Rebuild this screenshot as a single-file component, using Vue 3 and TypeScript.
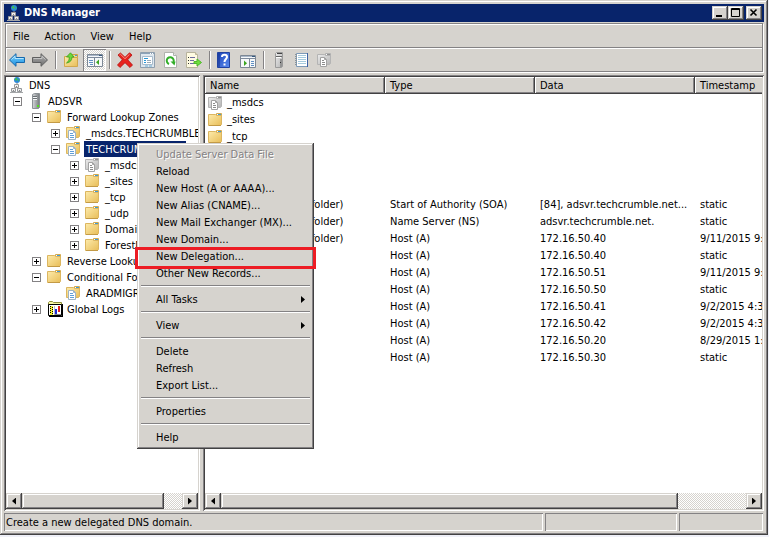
<script setup lang="ts">
import { ref } from 'vue'

interface TreeNode {
  label: string
  level: number
  icon: string
  toggle?: '+' | '-'
}

interface DnsRecord {
  name: string
  icon: string
  type: string
  data: string
  stamp: string
}

interface MenuEntry {
  label: string
  disabled?: boolean
  submenu?: boolean
  marked?: boolean
}

const selected = ref('TECHCRUMBLE.NET')

const menus = ['File', 'Action', 'View', 'Help']

const toolGroups = [
  [
    { icon: 'back', label: 'Back' },
    { icon: 'forward', label: 'Forward' },
  ],
  [
    { icon: 'up', label: 'Up one level' },
    { icon: 'console-tree', label: 'Show or hide console tree' },
  ],
  [
    { icon: 'delete', label: 'Delete' },
    { icon: 'properties', label: 'Properties' },
    { icon: 'refresh', label: 'Refresh' },
    { icon: 'export', label: 'Export list' },
  ],
  [
    { icon: 'help', label: 'Help' },
    { icon: 'action-pane', label: 'Show or hide action pane' },
  ],
  [
    { icon: 'tower', label: 'New server' },
    { icon: 'notebook', label: 'New record' },
    { icon: 'zone-grey', label: 'New zone' },
  ],
]

const tree: TreeNode[] = [
  { label: 'DNS', level: 0, icon: 'dns' },
  { label: 'ADSVR', level: 1, icon: 'server', toggle: '-' },
  { label: 'Forward Lookup Zones', level: 2, icon: 'folder', toggle: '-' },
  { label: '_msdcs.TECHCRUMBLE.NET', level: 3, icon: 'zone', toggle: '+' },
  { label: 'TECHCRUMBLE.NET', level: 3, icon: 'zone', toggle: '-' },
  { label: '_msdcs', level: 4, icon: 'zone-grey', toggle: '+' },
  { label: '_sites', level: 4, icon: 'folder', toggle: '+' },
  { label: '_tcp', level: 4, icon: 'folder', toggle: '+' },
  { label: '_udp', level: 4, icon: 'folder', toggle: '+' },
  { label: 'DomainDnsZones', level: 4, icon: 'folder', toggle: '+' },
  { label: 'ForestDnsZones', level: 4, icon: 'folder', toggle: '+' },
  { label: 'Reverse Lookup Zones', level: 2, icon: 'folder', toggle: '+' },
  { label: 'Conditional Forwarders', level: 2, icon: 'folder', toggle: '-' },
  { label: 'ARADMIGR', level: 3, icon: 'zone' },
  { label: 'Global Logs', level: 2, icon: 'logs', toggle: '+' },
]

const folder = (name: string, icon = 'folder'): DnsRecord => ({ name, icon, type: '', data: '', stamp: '' })
const host = (data: string, stamp: string, name = ''): DnsRecord => ({ name, icon: name ? 'notebook' : '', type: 'Host (A)', data, stamp })

const records: DnsRecord[] = [
  folder('_msdcs', 'zone-grey'),
  folder('_sites'),
  folder('_tcp'),
  folder(''),
  folder(''),
  folder(''),
  { name: '(same as parent folder)', icon: 'notebook', type: 'Start of Authority (SOA)', data: '[84], adsvr.techcrumble.net...', stamp: 'static' },
  { name: '(same as parent folder)', icon: 'notebook', type: 'Name Server (NS)', data: 'adsvr.techcrumble.net.', stamp: 'static' },
  host('172.16.50.40', '9/11/2015 9:00:00', '(same as parent folder)'),
  host('172.16.50.40', 'static'),
  host('172.16.50.51', '9/11/2015 9:00:00'),
  host('172.16.50.50', 'static'),
  host('172.16.50.41', '9/2/2015 4:30:00'),
  host('172.16.50.42', '9/2/2015 4:30:00'),
  host('172.16.50.20', '8/29/2015 1:00:00'),
  host('172.16.50.30', 'static'),
]

const contextMenu: MenuEntry[][] = [
  [
    { label: 'Update Server Data File', disabled: true },
    { label: 'Reload' },
    { label: 'New Host (A or AAAA)...' },
    { label: 'New Alias (CNAME)...' },
    { label: 'New Mail Exchanger (MX)...' },
    { label: 'New Domain...' },
    { label: 'New Delegation...', marked: true },
    { label: 'Other New Records...' },
  ],
  [{ label: 'All Tasks', submenu: true }],
  [{ label: 'View', submenu: true }],
  [{ label: 'Delete' }, { label: 'Refresh' }, { label: 'Export List...' }],
  [{ label: 'Properties' }],
  [{ label: 'Help' }],
]

const indent = (n: TreeNode) => ({ paddingLeft: `${n.level === 0 ? 3 : 19 * n.level - 12}px` })
</script>

<template>
  <svg class="sprite" aria-hidden="true">
    <defs>
      <linearGradient id="gFolder" x1="0" y1="0" x2="1" y2="1">
        <stop offset="0" stop-color="#fdebab" /><stop offset="1" stop-color="#e8bd58" />
      </linearGradient>
      <linearGradient id="gGrey" x1="0" y1="0" x2="1" y2="1">
        <stop offset="0" stop-color="#ececec" /><stop offset="1" stop-color="#b4b4b4" />
      </linearGradient>
      <linearGradient id="gBlue" x1="0" y1="0" x2="0" y2="1">
        <stop offset="0" stop-color="#7ed2fb" /><stop offset="1" stop-color="#1a90e2" />
      </linearGradient>
      <linearGradient id="gArrow" x1="0" y1="0" x2="0" y2="1">
        <stop offset="0" stop-color="#b0b0b0" /><stop offset="1" stop-color="#6e6e6e" />
      </linearGradient>
      <linearGradient id="gTower" x1="0" y1="0" x2="1" y2="0">
        <stop offset="0" stop-color="#d5d8da" /><stop offset="1" stop-color="#74797d" />
      </linearGradient>
      <linearGradient id="gHelp" x1="0" y1="0" x2="1" y2="1">
        <stop offset="0" stop-color="#1c45b8" /><stop offset="1" stop-color="#5c8cf0" />
      </linearGradient>
    </defs>

    <symbol id="i-folder" viewBox="0 0 16 16">
      <path d="M8.500 3.500V1.500h5v3" fill="#f6d98a" stroke="#d3aa50" />
      <path d="M.5 13.500v-11h7l1 1h5v9l-1 1z" fill="url(#gFolder)" stroke="#dcb660" />
      <path d="M9 2.500h1" stroke="#fff" /><path d="M10 2.500h3" stroke="#3f9bd6" />
      <path d="M1 13.500h12" stroke="#c39a45" />
    </symbol>
    <symbol id="i-zone" viewBox="0 0 16 16">
      <path d="M8.500 3.500V1.500h5v3" fill="#f6d98a" stroke="#d3aa50" />
      <path d="M.5 12.500v-10h7l1 1h5v8l-1 1z" fill="url(#gFolder)" stroke="#dcb660" />
      <path d="M9 2.500h1" stroke="#fff" /><path d="M10 2.500h3" stroke="#3f9bd6" />
      <path d="M2.500 5.500h5l2 2v7h-7z" fill="#fff" stroke="#9db4c6" />
      <path d="M7.500 5.500v2h2" fill="none" stroke="#9db4c6" />
      <path d="M4 8.500h3M4 10.500h4M4 12.500h4" stroke="#5f9ed6" />
    </symbol>
    <symbol id="i-zone-grey" viewBox="0 0 16 16">
      <path d="M8.500 3.500V1.500h5v3" fill="#dcdcdc" stroke="#b0b0b0" />
      <path d="M.5 12.500v-10h7l1 1h5v8l-1 1z" fill="url(#gGrey)" stroke="#b4b4b4" />
      <path d="M9 2.500h1" stroke="#fff" /><path d="M10 2.500h3" stroke="#909090" />
      <path d="M3.500 5.500h4l2 2v7h-6z" fill="#fff" stroke="#a2a2a2" />
      <path d="M7.500 5.500v2h2" fill="none" stroke="#a2a2a2" />
      <path d="M5 8.500h2M5 10.500h3M5 12.500h3" stroke="#8c8c8c" />
    </symbol>
    <symbol id="i-dns" viewBox="0 0 16 16">
      <circle cx="8" cy="3" r="3" fill="#2b86d9" />
      <path d="M5.500 2.500l2-2 1 1.500-1 2zM9 2.500l1.500-.5-1 3z" fill="#3fc04a" />
      <path d="M8 6v1M8 10v1" stroke="#8d8d8d" />
      <path d="M5.500 7.500h4v3h-4z" fill="#f2f2f2" stroke="#9a9a9a" />
      <path d="M2.500 11.500h4v3h-4zM8.500 11.500h4v3h-4z" fill="#eee" stroke="#94979a" />
      <path d="M1 15.500h13" stroke="#a4a6a8" />
      <path d="M4 13.500h1M10 13.500h1M7 9.500h1" stroke="#888" />
    </symbol>
    <symbol id="i-server" viewBox="0 0 16 16">
      <path d="M4.500 1.500l2-1h5v14l-1 1h-6z" fill="url(#gTower)" stroke="#8b9195" />
      <path d="M5 3.500h4M5 5.500h4" stroke="#6b7175" />
      <path d="M5 4.500h4M5 6.500h4" stroke="#f4f6f7" />
      <path d="M9 12h2v2H9z" fill="#4fe01d" />
    </symbol>
    <symbol id="i-tower" viewBox="0 0 16 16">
      <path d="M4.500 1.500l1-1h6v14l-1 1h-6z" fill="url(#gGrey)" stroke="#9a9a9a" />
      <path d="M6 1.500h5" stroke="#444" /><path d="M5 4.500h6" stroke="#666" />
      <path d="M5 5.500h5" stroke="#fff" />
      <path d="M9 7h2v8H9z" fill="#949494" /><path d="M9 10h1v1H9z" fill="#333" />
    </symbol>
    <symbol id="i-logs" viewBox="0 0 16 16">
      <path d="M1.500 3.500V1.500l1-1h3l1 1h8v3z" fill="#f7f7a0" stroke="#8d8d3c" />
      <path d="M1.500 3.500h13v11h-13z" fill="#fff" stroke="#000" />
      <path d="M15.500 3v13M2 15.500h14" stroke="#000" />
      <path d="M3 5h3v9H3z" fill="#f5ef32" />
      <path d="M3 5.500h1M5 6.500h1M3 7.500h1M5 8.500h1M3 9.500h1M5 10.500h1M3 11.500h1M5 12.500h1" stroke="#000" />
      <path d="M7.500 5v9" stroke="#bbb" />
      <path d="M9 8v5" stroke="#1a2bd0" stroke-width="2" /><path d="M12 5v6" stroke="#e32020" stroke-width="2" />
      <path d="M8 13.500h6" stroke="#888" />
    </symbol>
    <symbol id="i-back" viewBox="0 0 16 16">
      <path d="M.5 8L7 1.700V5.500h8.500v5H7v3.800z" fill="url(#gBlue)" stroke="#1769ad" stroke-linejoin="round" />
      <path d="M2.500 7.500L6 4.200v2.300h8.500" fill="none" stroke="#b4e6ff" />
    </symbol>
    <symbol id="i-forward" viewBox="0 0 16 16">
      <path d="M15.500 8L9 1.700V5.500H.5v5H9v3.800z" fill="url(#gArrow)" stroke="#5f5f5f" stroke-linejoin="round" />
      <path d="M13.500 7.500L10 4.200v2.300H1.500" fill="none" stroke="#c4c4c4" />
    </symbol>
    <symbol id="i-up" viewBox="0 0 16 16">
      <path d="M8.500 4.500v-2h6v3" fill="#f6d98a" stroke="#cda247" />
      <path d="M1.500 14.500v-10h7l1 1h5v9z" fill="url(#gFolder)" stroke="#d0a84f" />
      <path d="M12 3.500h2" stroke="#3f9bd6" />
      <path d="M7.500.8L11 5H9c0 3.500-2 5.500-5.500 6C5.500 9.500 6.500 8 6.200 5H3.500z" fill="#6ed63c" stroke="#36a01c" stroke-width=".8" />
    </symbol>
    <symbol id="i-console-tree" viewBox="0 0 16 16">
      <path d="M.5 2.500h15v12H.5z" fill="#f6f8fa" stroke="#7c8794" />
      <path d="M1 3.500h14" stroke="#a9b7c9" /><path d="M1 5.500h14" stroke="#7d8a9c" />
      <path d="M12 3.500h3" stroke="#35597f" />
      <path d="M7.500 6v8" stroke="#7c8794" />
      <path d="M2 8.500h4M2 10.500h4M3 12.500h3" stroke="#5f90c4" />
      <path d="M12 7.500v5.500L9 10.200z" fill="#3ba51f" />
    </symbol>
    <symbol id="i-action-pane" viewBox="0 0 16 16">
      <path d="M.5 3.500h15v12H.5z" fill="#f6f8fa" stroke="#7c8794" />
      <path d="M1 4.500h14" stroke="#a9b7c9" /><path d="M1 6.500h14" stroke="#7d8a9c" />
      <path d="M12 4.500h3" stroke="#35597f" />
      <path d="M9.500 7v8" stroke="#7c8794" />
      <path d="M11 9.500h3M11 11.500h3M11 13.500h3" stroke="#5f90c4" />
      <path d="M4 8.500V14l3-2.800z" fill="#3ba51f" />
    </symbol>
    <symbol id="i-delete" viewBox="0 0 16 16">
      <path d="M1 3l2.500-2L8 5.300 12.500.8 15 3l-4.300 4.800L15.500 13 13 15.500 8 10.700l-5 4.800L.5 13l4.800-5.200z" fill="#e8221d" stroke="#b3120f" stroke-width=".8" />
      <path d="M2.500 3l1-.7L8 6.700l4.500-4.400" fill="none" stroke="#f98f86" />
    </symbol>
    <symbol id="i-properties" viewBox="0 0 16 16">
      <path d="M.5.5h14v15H.5z" fill="#dfe7ee" stroke="#8f9fae" />
      <path d="M1 1.500h13" stroke="#8ba2b8" /><path d="M10 1.500h4" stroke="#fff" stroke-dasharray="1 1" />
      <path d="M2.500 4.500h10v8h-10z" fill="#fff" stroke="#a8bccd" />
      <path d="M4 6.500h4M4 8.500h2M4 10.500h2" stroke="#2796d6" /><path d="M7 8.500h4M7 10.500h4" stroke="#9aa9b6" />
      <path d="M5 14h3M9 14h3" stroke="#6faed3" />
    </symbol>
    <symbol id="i-refresh" viewBox="0 0 16 16">
      <path d="M1.500.5h9l3 3v12h-12z" fill="#fff" stroke="#b0b2ac" />
      <path d="M10.500.5v3h3" fill="#e8e8e8" stroke="#b0b2ac" />
      <path d="M6 12A3.500 3.500 0 1 1 10.500 10" fill="none" stroke="#33ae28" stroke-width="2" />
      <path d="M7.500 9.500l5 0-1 4z" fill="#33ae28" />
    </symbol>
    <symbol id="i-export" viewBox="0 0 16 16">
      <path d="M.5.5h9l2 2v13H.5z" fill="#fffbe2" stroke="#b8b39c" />
      <path d="M9.500.5v2h2" fill="#eee6bb" stroke="#b8b39c" />
      <path d="M2 5.500h1M2 8.500h1M2 11.500h1" stroke="#333" /><path d="M4 5.500h5M4 8.500h4M4 11.500h4" stroke="#6d6aa0" />
      <path d="M8 9.500h3V7l4.500 3.500L11 14v-2.500H8z" fill="#6fdc3d" stroke="#4fb92c" />
    </symbol>
    <symbol id="i-help" viewBox="0 0 16 16">
      <path d="M.5.5h12v15H.5z" fill="url(#gHelp)" stroke="#2142a0" />
      <path d="M2 1v14" stroke="#16338f" />
      <path d="M5 5c0-3 5-3 5 0 0 2-2.500 2-2.500 5" fill="none" stroke="#fff" stroke-width="2" />
      <path d="M6.500 11.500h2v2h-2z" fill="#fff" />
    </symbol>
    <symbol id="i-notebook" viewBox="0 0 16 16">
      <path d="M2.500 1.500h11v13h-11z" fill="#fff" stroke="#7d9ab8" />
      <path d="M13.500 1v14" stroke="#3d62a5" />
      <path d="M4 3.500h8M4 5.500h8M4 7.500h8M4 9.500h8M4 11.500h8" stroke="#a5cadd" />
      <path d="M1 2.500h2M1 4.500h2M1 6.500h2M1 8.500h2M1 10.500h2M1 12.500h2" stroke="#8a959c" />
    </symbol>
  </svg>

  <div class="window">
    <header class="titlebar">
      <svg class="icon"><use href="#i-dns" /></svg>
      <h1>DNS Manager</h1>
      <div class="controls">
        <button type="button" class="raised" aria-label="Minimize">
          <svg viewBox="0 0 12 10"><path d="M2 8h6" stroke="#000" stroke-width="2" /></svg>
        </button>
        <button type="button" class="raised" aria-label="Maximize">
          <svg viewBox="0 0 12 10"><path d="M1.500.5h8v8h-8zM1 1.500h9" fill="none" stroke="#000" /></svg>
        </button>
        <button type="button" class="raised close" aria-label="Close">
          <svg viewBox="0 0 12 10"><path d="M2.500 1.500l6 6M8.500 1.500l-6 6" stroke="#000" stroke-width="1.600" /></svg>
        </button>
      </div>
    </header>

    <div class="rebar">
      <nav class="menubar">
        <button v-for="m in menus" :key="m" type="button">{{ m }}</button>
      </nav>
      <div class="toolbar">
        <div v-for="(group, g) in toolGroups" :key="g" class="group">
          <button
            v-for="t in group"
            :key="t.icon"
            type="button"
            :aria-label="t.label"
            :class="{ pressed: t.icon === 'console-tree' }"
          >
            <svg class="icon"><use :href="'#i-' + t.icon" /></svg>
          </button>
        </div>
      </div>
    </div>

    <main class="panes">
      <section class="pane">
        <ul class="tree">
          <li v-for="n in tree" :key="n.level + n.label" :style="indent(n)">
            <span v-if="n.level > 0" class="slot">
              <button v-if="n.toggle" type="button" class="toggle" :class="{ plus: n.toggle === '+' }" :aria-label="'Toggle ' + n.label"></button>
            </span>
            <svg class="icon"><use :href="'#i-' + n.icon" /></svg>
            <button type="button" class="node" :class="{ selected: selected === n.label }" @click="selected = n.label">{{ n.label }}</button>
          </li>
        </ul>
        <div class="scrollbar">
          <button type="button" class="raised" aria-label="Scroll left"><i class="arrow left"></i></button>
          <div class="track"><div class="thumb raised" :style="{ width: '89%' }"></div></div>
          <button type="button" class="raised" aria-label="Scroll right"><i class="arrow"></i></button>
        </div>
      </section>

      <section class="pane">
        <div class="list">
          <table>
            <colgroup><col class="c-name" /><col class="c-type" /><col class="c-data" /><col /></colgroup>
            <thead>
              <tr><th>Name</th><th>Type</th><th>Data</th><th>Timestamp</th></tr>
            </thead>
            <tbody>
              <tr v-for="(r, i) in records" :key="i">
                <td class="name">
                  <div>
                    <svg v-if="r.icon" class="icon"><use :href="'#i-' + r.icon" /></svg>
                    <span>{{ r.name }}</span>
                  </div>
                </td>
                <td>{{ r.type }}</td>
                <td>{{ r.data }}</td>
                <td>{{ r.stamp }}</td>
              </tr>
            </tbody>
          </table>
        </div>
        <div class="scrollbar">
          <button type="button" class="raised" aria-label="Scroll left"><i class="arrow left"></i></button>
          <div class="track"><div class="thumb raised" :style="{ width: '87%' }"></div></div>
          <button type="button" class="raised" aria-label="Scroll right"><i class="arrow"></i></button>
        </div>
      </section>
    </main>

    <footer class="status">
      <span>Create a new delegated DNS domain.</span><span></span><span></span>
    </footer>

    <div class="context">
      <div v-for="(section, s) in contextMenu" :key="s" class="section">
        <button
          v-for="e in section"
          :key="e.label"
          type="button"
          :disabled="e.disabled"
          :class="{ marked: e.marked }"
        >
          {{ e.label }}<i v-if="e.submenu" class="arrow"></i>
        </button>
      </div>
    </div>
  </div>
</template>

<style>
body {
  background: #eff0f8;
}
</style>

<style scoped>
.sprite {
  position: absolute;
  width: 0;
  height: 0;
}
.window {
  --face: #d6d3ce;
  --shade: #848284;
  --dark: #424142;
  --navy: #08246b;
  position: relative;
  box-sizing: border-box;
  display: flex;
  flex-direction: column;
  height: calc(100vh - 2px);
  margin-right: 1px;
  padding: 4px;
  background: var(--face);
  box-shadow: inset -1px -1px var(--dark), inset 1px 1px var(--face), inset -2px -2px var(--shade), inset 2px 2px #fff;
  color: #000;
  font: 11px/16px "DejaVu Sans Condensed", "DejaVu Sans", sans-serif;
  white-space: nowrap;
  overflow: hidden;
}
button {
  padding: 0;
  border: 0;
  background: none;
  color: inherit;
  font: inherit;
  text-align: left;
}
.icon {
  flex: none;
  display: block;
  width: 16px;
  height: 16px;
}
.raised {
  background: var(--face);
  box-shadow: inset -1px -1px var(--dark), inset 1px 1px var(--face), inset -2px -2px var(--shade), inset 2px 2px #fff;
}
.titlebar {
  flex: none;
  display: flex;
  align-items: center;
  gap: 2px;
  height: 18px;
  padding: 0 2px;
  background: var(--navy);
  color: #fff;
}
h1 {
  flex: 1;
  margin: 0;
  font-size: 11px;
  font-weight: bold;
}
.controls {
  display: flex;
}
.controls button {
  width: 16px;
  height: 14px;
  padding: 2px;
}
.controls svg {
  display: block;
  width: 12px;
  height: 10px;
}
.controls .close {
  margin-left: 2px;
}
.rebar {
  flex: none;
  margin: 1px 1px 3px;
  border: 1px solid var(--shade);
  box-shadow: inset 1px 1px #fff, 1px 1px #fff;
}
.menubar {
  display: flex;
  gap: 1px;
  height: 23px;
  border-bottom: 1px solid var(--shade);
}
.menubar button {
  padding: 2px 7px 0;
}
.toolbar {
  display: flex;
  height: 22px;
  border-top: 1px solid #fff;
}
.group {
  display: flex;
}
.group + .group::before {
  content: "";
  width: 1px;
  margin: 2px 3px;
  background: var(--shade);
  border-right: 1px solid #fff;
}
.group button {
  width: 23px;
  padding: 0 3px;
}
.group .pressed {
  padding-left: 4px;
  background: repeating-conic-gradient(#fff 0 25%, var(--face) 0 50%) 0 0 / 2px 2px;
  box-shadow: inset 1px 1px var(--shade), inset -1px -1px #fff;
}
.panes {
  flex: 1;
  display: grid;
  grid-template-columns: 196px minmax(0, 1fr);
  gap: 3px;
  min-height: 0;
}
.pane {
  display: flex;
  flex-direction: column;
  min-width: 0;
  min-height: 0;
  padding: 2px;
  background: #fff;
  box-shadow: inset 1px 1px var(--shade), inset -1px -1px #fff, inset 2px 2px var(--dark), inset -2px -2px var(--face);
}
.tree {
  flex: 1;
  margin: 0;
  padding: 0;
  overflow: hidden;
  list-style: none;
}
.tree li {
  display: flex;
  align-items: center;
  height: 16px;
}
.slot {
  flex: none;
  display: flex;
  width: 15px;
}
.toggle {
  width: 9px;
  height: 9px;
  border: 1px solid var(--shade);
  background: linear-gradient(#000, #000) center / 5px 1px no-repeat;
}
.toggle.plus {
  background: linear-gradient(#000, #000) center / 5px 1px no-repeat, linear-gradient(#000, #000) center / 1px 5px no-repeat;
}
.node {
  margin-left: 2px;
  padding: 2px 2px 0;
  line-height: 14px;
}
.node.selected {
  background: var(--navy);
  color: #fff;
}
.scrollbar {
  flex: none;
  display: flex;
  height: 16px;
}
.scrollbar button {
  display: flex;
  align-items: center;
  justify-content: center;
  width: 16px;
}
.track {
  flex: 1;
  background: repeating-conic-gradient(#fff 0 25%, var(--face) 0 50%) 0 0 / 2px 2px;
}
.thumb {
  height: 100%;
}
.arrow {
  width: 4px;
  height: 7px;
  background: #000;
  clip-path: polygon(0 0, 100% 50%, 0 100%);
}
.arrow.left {
  clip-path: polygon(100% 0, 0 50%, 100% 100%);
}
.list {
  flex: 1;
  min-height: 0;
  overflow: hidden;
}
table {
  width: 100%;
  border-collapse: separate;
  border-spacing: 0;
  table-layout: fixed;
}
.c-name {
  width: 180px;
}
.c-type {
  width: 150px;
}
.c-data {
  width: 160px;
}
th,
td {
  box-sizing: border-box;
  height: 17px;
  padding: 1px 0 0 5px;
  overflow: hidden;
  font-weight: normal;
  line-height: 16px;
  text-align: left;
}
th {
  background: var(--face);
  box-shadow: inset -1px -1px var(--dark), inset 1px 1px #fff, inset -2px -2px var(--shade);
}
th:last-child {
  box-shadow: inset 0 -1px var(--dark), inset 1px 1px #fff, inset 0 -2px var(--shade);
}
.name div {
  display: flex;
  align-items: center;
  gap: 3px;
}
td.name {
  padding-left: 3px;
}
.status {
  flex: none;
  display: grid;
  grid-template-columns: minmax(0, 1fr) 132px 84px;
  gap: 2px;
  height: 18px;
  margin: 2px 1px 0 0;
}
.status span {
  padding: 2px 0 0 2px;
  line-height: 16px;
  box-shadow: inset 1px 1px var(--shade), inset -1px -1px #fff;
}
.context {
  position: absolute;
  top: 143px;
  left: 137px;
  box-sizing: border-box;
  width: 177px;
  padding: 3px;
  background: var(--face);
  box-shadow: inset -1px -1px var(--dark), inset 1px 1px var(--face), inset -2px -2px var(--shade), inset 2px 2px #fff;
}
.section + .section::before {
  content: "";
  display: block;
  height: 1px;
  margin: 3px 1px 4px;
  background: var(--shade);
  border-bottom: 1px solid #fff;
}
.section button {
  position: relative;
  display: flex;
  align-items: center;
  justify-content: space-between;
  width: 100%;
  height: 17px;
  padding: 0 6px 0 16px;
}
.section button:disabled {
  color: var(--shade);
  text-shadow: 1px 1px #fff;
}
.marked::after {
  content: "";
  position: absolute;
  inset: -1px -5px -4px;
  border: 3px solid #ed1c24;
  z-index: 1;
}
</style>
